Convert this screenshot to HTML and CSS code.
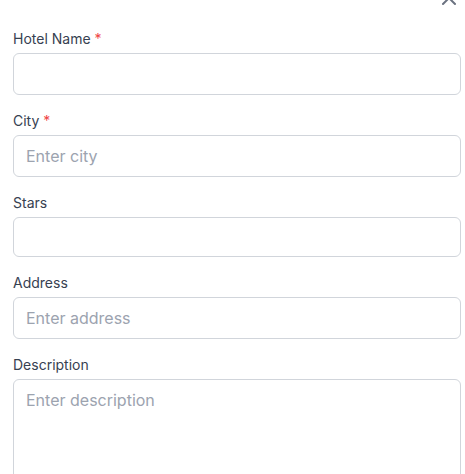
FILE: index.html
```
<!DOCTYPE html>
<html lang="en">
<head>
<meta charset="utf-8">
<link rel="stylesheet" href="styles.css">
</head>
<body>
<div class="modal">
  <div class="modal-header">
    <button class="close-btn" aria-label="Close">
      <svg width="24" height="24" viewBox="0 0 24 24" fill="none" stroke="currentColor" stroke-width="2" stroke-linecap="round" stroke-linejoin="round"><path d="M18 6 6 18"/><path d="m6 6 12 12"/></svg>
    </button>
  </div>
  <form class="form">
    <div class="field">
      <label class="label">Hotel Name <span class="req">*</span></label>
      <input class="input" type="text">
    </div>
    <div class="field">
      <label class="label">City <span class="req">*</span></label>
      <input class="input" type="text" placeholder="Enter city">
    </div>
    <div class="field">
      <label class="label">Stars</label>
      <input class="input input-num" type="number">
    </div>
    <div class="field">
      <label class="label">Address</label>
      <input class="input" type="text" placeholder="Enter address">
    </div>
    <div class="field">
      <label class="label">Description</label>
      <textarea class="input textarea" placeholder="Enter description"></textarea>
    </div>
  </form>
</div>
</body>
</html>
```
FILE: styles.css
```
* { box-sizing: border-box; }
html, body { margin: 0; padding: 0; background: #ffffff; overflow: hidden; }
body { font-family: Inter, "Noto Sans", sans-serif; }
.modal { padding: 0 4px 0 13px; }
.modal-header {
  display: flex;
  justify-content: flex-end;
  height: 28px;
  margin-top: -14px;
}
.close-btn {
  border: 0;
  background: none;
  padding: 0;
  width: 24px;
  height: 24px;
  color: #6b7280;
  display: flex;
}
.form { display: flex; flex-direction: column; gap: 16px; padding-top: 15px; }
.field { display: flex; flex-direction: column; gap: 4px; }
.label {
  font-size: 14px;
  line-height: 20px;
  font-weight: 400;
  color: #374151;
}
.req { color: #ef4444; }
.input {
  width: 100%;
  height: 42px;
  border: 1px solid #d1d5db;
  border-radius: 6px;
  padding: 10px 12px;
  font-family: Inter, "Noto Sans", sans-serif;
  font-size: 16px;
  line-height: 20px;
  color: #111827;
  background: #fff;
  outline: none;
}
.input::placeholder { color: #9ca3af; }
.input-num { height: 40px; padding: 9px 12px; }
.textarea { height: 130px; line-height: 24px; padding-top: 8px; resize: none; }
```
